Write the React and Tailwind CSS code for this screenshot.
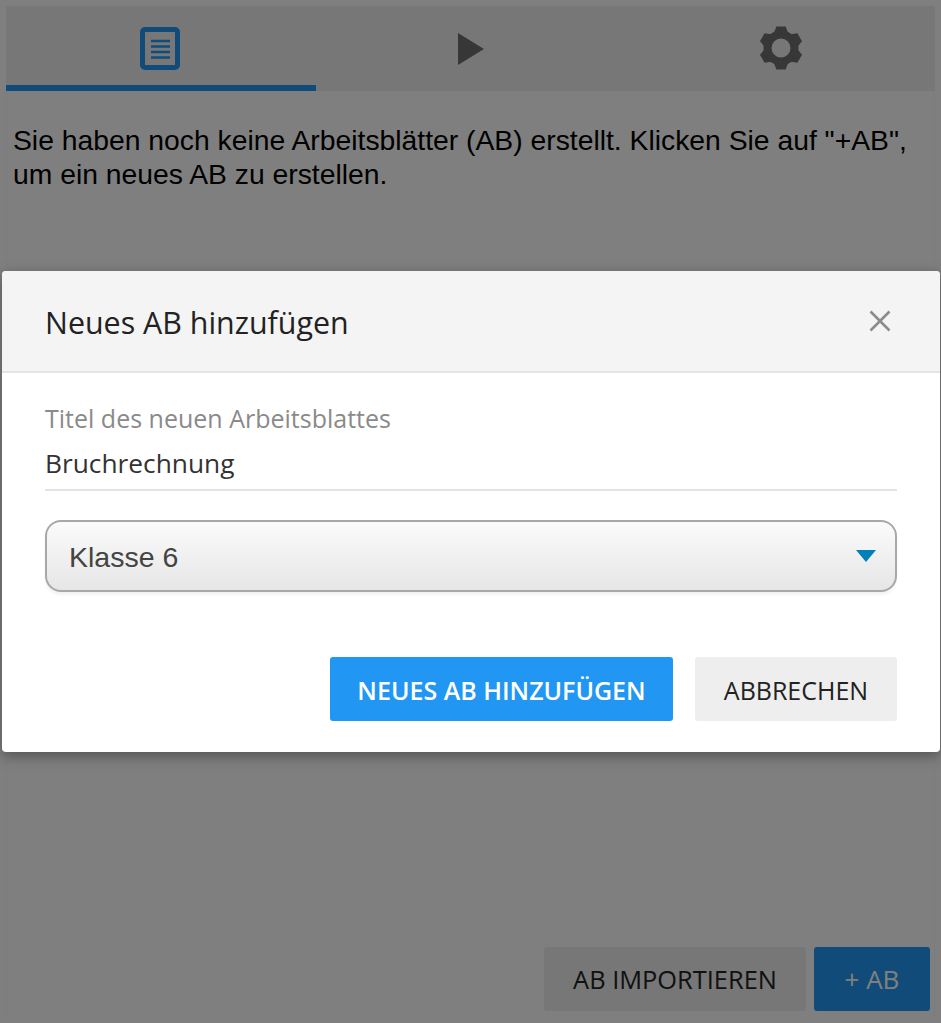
import { useMemo } from "react";

const openSans = "font-['Open_Sans',sans-serif]";

function SheetIcon() {
  return (
    <svg width="40" height="43" viewBox="0 0 40 43" fill="none">
      <rect x="2.5" y="2.5" width="35" height="38" rx="2.5" stroke="#2196f3" strokeWidth="5" />
      <path d="M11 14h19M11 19.5h19M11 25h19M11 30.5h19" stroke="#2196f3" strokeWidth="2.6" />
    </svg>
  );
}

function PlayIcon() {
  return (
    <svg width="26" height="32" viewBox="0 0 26 32">
      <polygon points="0,0 26,16 0,32" fill="#6f6f6f" />
    </svg>
  );
}

function GearIcon() {
  const teeth = useMemo(() => [0, 60, 120, 180, 240, 300], []);
  return (
    <svg width="42" height="44" viewBox="-21 -22 42 44">
      <circle r="13.5" fill="none" stroke="#6f6f6f" strokeWidth="8" />
      {teeth.map((angle) => (
        <polygon
          key={angle}
          points="-7.5,-14 -4.6,-21.6 4.6,-21.6 7.5,-14"
          fill="#6f6f6f"
          transform={`rotate(${angle})`}
        />
      ))}
    </svg>
  );
}

function Tabs() {
  return (
    <div className="flex h-[85px] shrink-0 bg-[#eeeeee]">
      <div className="flex h-[85px] w-[310px] items-center justify-center border-b-[6px] border-[#2196f3] pr-[2px] pt-[6px]">
        <SheetIcon />
      </div>
      <div className="flex w-[310px] items-center justify-center">
        <PlayIcon />
      </div>
      <div className="flex w-[309px] items-center justify-center pb-[1px]">
        <GearIcon />
      </div>
    </div>
  );
}

function Dialog() {
  return (
    <div className={`flex h-[481px] w-[938px] flex-col rounded-[4px] bg-white shadow-[0_4px_14px_rgba(0,0,0,0.35)] ${openSans}`}>
      <div className="flex h-[102px] shrink-0 items-center justify-between rounded-t-[4px] border-b-2 border-[#e4e4e4] bg-[#f4f4f4] pl-[43px] pr-[49px]">
        <h2 className="pt-[4px] text-[30.4px] leading-none text-[#222222]">Neues AB hinzufügen</h2>
        <svg width="22" height="22" viewBox="0 0 22 22">
          <path d="M1.5 1.5l19 19M20.5 1.5l-19 19" stroke="#8c8c8c" strokeWidth="2.6" />
        </svg>
      </div>
      <div className="flex flex-col px-[43px]">
        <label className="mt-[29px] text-[25px] leading-[32px] text-[#8a8a8a]">Titel des neuen Arbeitsblattes</label>
        <div className="mt-[10px] h-[47px] border-b-2 border-[#e4e4e4] text-[26.3px] leading-[38px] text-[#333333]">Bruchrechnung</div>
        <div className="mt-[29px] flex h-[72px] items-center justify-between rounded-[16px] border-2 border-[#a8a8a8] bg-gradient-to-b from-[#fbfbfb] to-[#e6e6e6] pl-[22px] pr-[19px] font-['Liberation_Sans',sans-serif] text-[28.5px] text-[#444444] shadow-[0_3px_3px_rgba(0,0,0,0.05)]">
          <span className="pt-[2px]">Klasse 6</span>
          <svg width="20" height="12" viewBox="0 0 20 12" className="mt-[-1px]">
            <polygon points="0,0 20,0 10,12" fill="#0080b9" />
          </svg>
        </div>
        <div className="mt-[65px] flex justify-end gap-[22px]">
          <button className="h-[64px] w-[343px] rounded-[3px] bg-[#2196f3] pt-[4px] text-[25px] font-semibold text-white">NEUES AB HINZUFÜGEN</button>
          <button className="h-[64px] w-[202px] rounded-[3px] bg-[#eeeeee] pt-[4px] text-[25px] font-medium text-[#222222]">ABBRECHEN</button>
        </div>
      </div>
    </div>
  );
}

export default function App() {
  return (
    <div className="relative h-[1023px] w-[941px] overflow-hidden bg-white">
      <div className="flex h-full flex-col p-[6px] pb-[5px]">
        <Tabs />
        <div className="flex flex-1 flex-col border-x border-[#f8f8f8]">
          <p className="mt-[32px] px-[6px] font-['Liberation_Sans',sans-serif] text-[28.3px] leading-[34px] text-black">
            Sie haben noch keine Arbeitsblätter (AB) erstellt. Klicken Sie auf "+AB",
            <br />
            um ein neues AB zu erstellen.
          </p>
          <div className={`mt-auto flex justify-end gap-[8px] pb-[7px] pr-[4px] ${openSans}`}>
            <button className="h-[64px] w-[262px] rounded-[3px] bg-[#eeeeee] text-[25.4px] font-medium text-[#222222]">AB IMPORTIEREN</button>
            <button className="h-[64px] w-[116px] rounded-[3px] bg-[#2196f3] text-[26px] font-medium text-white">+ AB</button>
          </div>
        </div>
      </div>
      <div className="absolute inset-0 bg-black/50 pl-[2px] pt-[271px]">
        <Dialog />
      </div>
    </div>
  );
}
